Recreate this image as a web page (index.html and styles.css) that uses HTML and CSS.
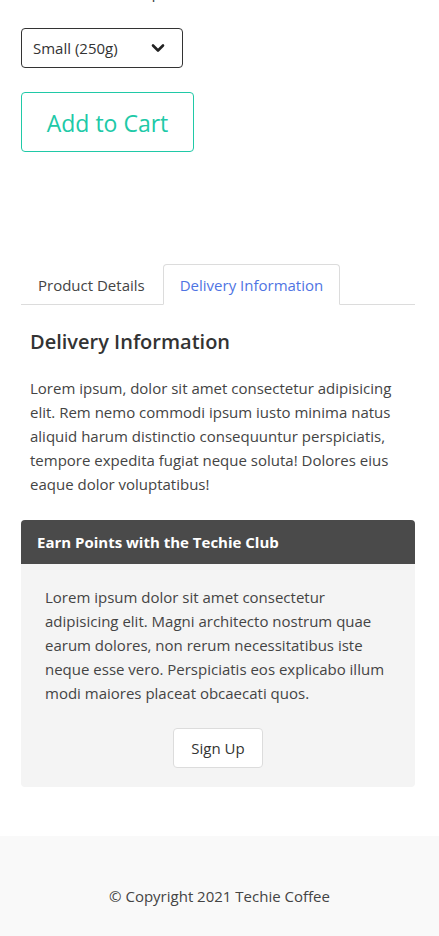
FILE: index.html
```html
<!DOCTYPE html>
<html lang="en">
<head>
<meta charset="utf-8">
<title>Techie Coffee</title>
<link rel="stylesheet" href="styles.css">
</head>
<body>
<main class="product">
  <p class="size-label">Choose the size option</p>
  <div class="select">
    <span class="select-text">Small (250g)</span>
    <svg class="chevron" width="14" height="10" viewBox="0 0 14 10"><path d="M2 2.5 L7 7.5 L12 2.5" fill="none" stroke="#222" stroke-width="2.6" stroke-linecap="round" stroke-linejoin="round"/></svg>
  </div>
  <button class="add-cart">Add to Cart</button>

  <section class="tabs">
    <nav class="tab-nav">
      <span class="tab tab-first">Product Details</span>
      <span class="tab tab-active">Delivery Information</span>
    </nav>
    <div class="tab-pane">
      <h2 class="pane-title">Delivery Information</h2>
      <p class="pane-text">Lorem ipsum, dolor sit amet consectetur adipisicing elit. Rem nemo commodi ipsum iusto minima natus aliquid harum distinctio consequuntur perspiciatis, tempore expedita fugiat neque soluta! Dolores eius eaque dolor voluptatibus!</p>
    </div>
  </section>

  <section class="card">
    <header class="card-header">Earn Points with the Techie Club</header>
    <div class="card-body">
      <p class="card-text">Lorem ipsum dolor sit amet consectetur adipisicing elit. Magni architecto nostrum quae earum dolores, non rerum necessitatibus iste neque esse vero. Perspiciatis eos explicabo illum modi maiores placeat obcaecati quos.</p>
      <div class="card-actions"><button class="signup">Sign Up</button></div>
    </div>
  </section>
</main>
<footer class="footer">© Copyright 2021 Techie Coffee</footer>
</body>
</html>
```
FILE: styles.css
```css
* { box-sizing: border-box; }
html, body { margin: 0; padding: 0; }
body {
  font-family: "Open Sans", "Noto Sans", sans-serif;
  font-size: 16px;
  line-height: 24px;
  color: #444;
  background: #fff;
  overflow: hidden;
}
.product {
  padding: 0 24px 49px 21px;
}
.size-label {
  margin: -20px 0 0 0;
  line-height: 24px;
  color: #444;
}
.select {
  margin-top: 24px;
  width: 162px;
  height: 40px;
  border: 1px solid #333;
  border-radius: 4px;
  display: flex;
  align-items: center;
  justify-content: space-between;
  padding: 0 17px 0 11px;
  color: #333;
  font-size: 15px;
}
.chevron { display: block; }
.add-cart {
  display: block;
  margin-top: 24px;
  width: 173px;
  height: 60px;
  padding: 0;
  border: 1px solid #20c9a7;
  border-radius: 4px;
  background: #fff;
  color: #20c9a7;
  font-family: inherit;
  font-size: 23px;
  line-height: 30px;
  padding-top: 2px;
}
.tabs { margin-top: 112px; }
.tab-nav {
  display: flex;
  border-bottom: 1px solid #dcdcdc;
}
.tab {
  display: block;
  padding: 0 16px;
  height: 41px;
  line-height: 41px;
  margin-bottom: -1px;
  border: 1px solid transparent;
  border-radius: 4px 4px 0 0;
  color: #444;
  font-size: 15px;
}
.tab-first { padding-right: 17px; }
.tab-active {
  border-color: #dcdcdc #dcdcdc #fff;
  background: #fff;
  color: #4f74e3;
}
.tab-pane { padding: 0 9px; }
.pane-title {
  margin: 24px 0 0;
  font-size: 20px;
  line-height: 26px;
  font-weight: 600;
  color: #333;
}
.pane-text {
  margin: 21px 0 0;
  font-size: 15px;
}
.card {
  margin-top: 24px;
  border-radius: 4px;
  overflow: hidden;
  background: #f4f4f4;
}
.card-header {
  height: 44px;
  line-height: 44px;
  padding: 0 16px;
  background: #4a4a4a;
  color: #fff;
  font-weight: 700;
  font-size: 15px;
}
.card-body { padding: 21px 24px 19px; }
.card-text { margin: 0; font-size: 15px; }
.card-actions {
  display: flex;
  justify-content: center;
  margin-top: 23px;
}
.signup {
  height: 40px;
  padding: 0 17px;
  background: #fff;
  border: 1px solid #dcdcdc;
  border-radius: 4px;
  color: #333;
  font-family: inherit;
  font-size: 15px;
}
.footer {
  background: #f9f9f9;
  padding: 48px 0 40px;
  text-align: center;
  color: #444;
  font-size: 15px;
}
```
